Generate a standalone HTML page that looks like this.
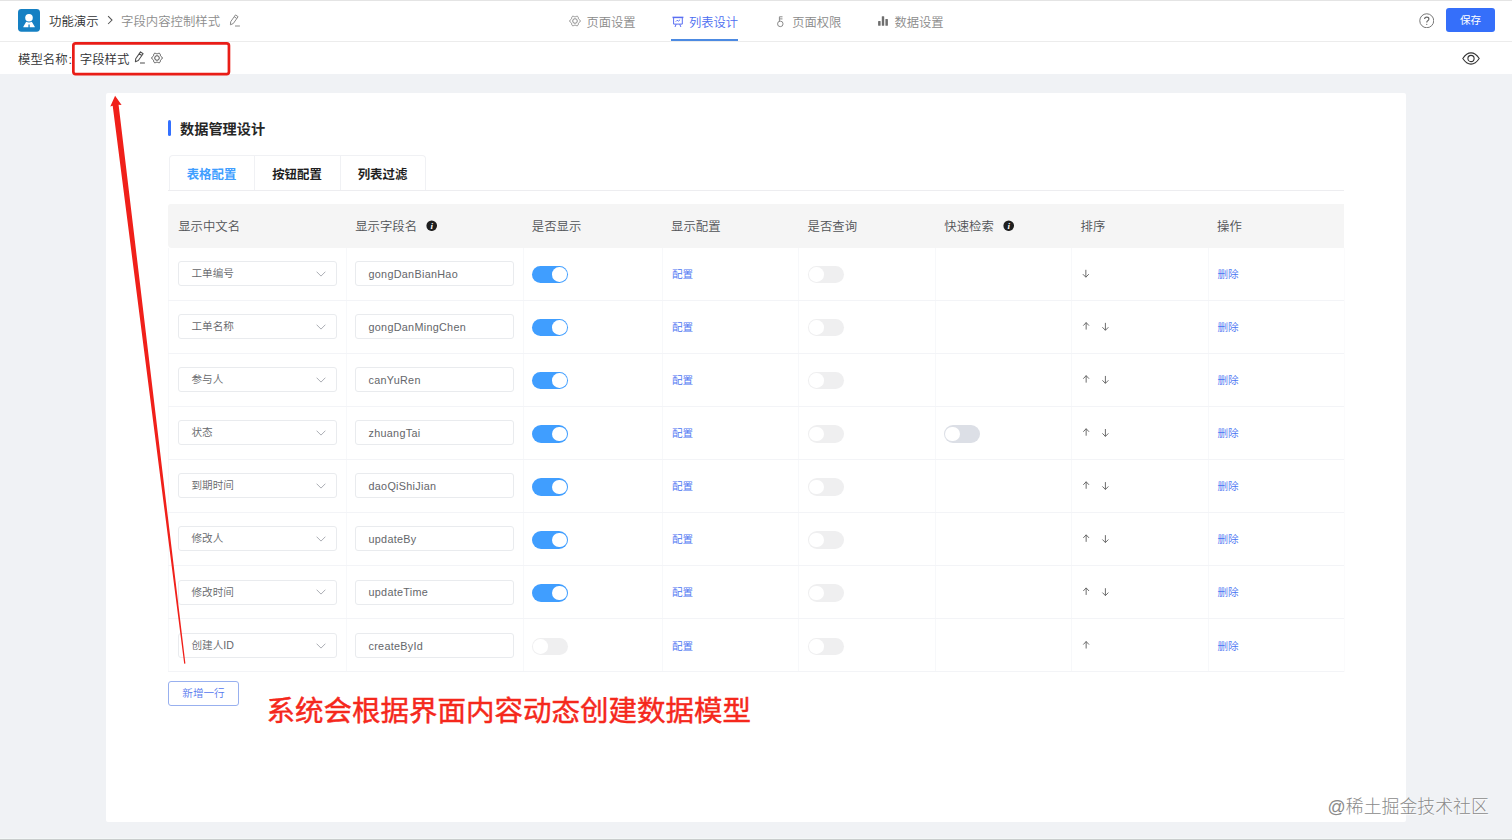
<!DOCTYPE html>
<html lang="zh-CN">
<head>
<meta charset="utf-8">
<title>字段内容控制样式</title>
<style>
*{margin:0;padding:0;box-sizing:border-box}
html,body{width:1512px;height:840px;overflow:hidden}
body{position:relative;background:#f0f2f5;font-family:"Liberation Sans","Noto Sans CJK SC",sans-serif;font-size:12.4px;color:#303133;font-weight:350}
body>*{position:absolute}
.hdr{left:0;top:0;width:1512px;height:42px;background:#fff;border-top:1px solid #e4e4e4;border-bottom:1px solid #ececec}
.sub{left:0;top:42px;width:1512px;height:32px;background:#fff}
.card{left:106px;top:93px;width:1300px;height:729px;background:#fff;border-radius:2px}
.t{white-space:nowrap;line-height:20px;height:20px}
.logo{left:18px;top:9.2px;width:22px;height:22.7px}
.nav{font-size:12.3px;color:#8a8a8a;top:12.9px}
.nav.act{color:#4a6cf0}
.ul{left:671px;top:39px;width:67px;height:2px;background:#4c8ae2}
.save{left:1446px;top:8px;width:49px;height:24.4px;background:#356ffa;border-radius:3px;color:#fff;font-size:10.6px;line-height:25.4px;text-align:center;font-weight:400}
.bar{left:168px;top:120px;width:3px;height:16px;background:#3370ff;border-radius:1.5px}
.h1{left:180px;top:119px;font-size:14.2px;font-weight:bold;color:#262626;line-height:20px;white-space:nowrap}
.tabs{left:169px;top:155px;width:257px;height:36px;border:1px solid #f0f1f4;border-bottom:none;border-radius:4px 4px 0 0}
.tabline{left:168px;top:190px;width:1176px;height:1px;background:#ededf0}
.tab{top:165.1px;width:86px;text-align:center;font-weight:bold;font-size:12.4px;line-height:20px;color:#1f1f1f}
.tab.act{color:#409eff}
.tdv{top:155px;width:1px;height:35px;background:#f0f1f4}
.thead{left:168px;top:204px;width:1176px;height:43.5px;background:#f5f5f5;border-radius:3px 0 0 4px}
.th{top:216.7px;font-size:12.37px;line-height:20px;color:#505256;white-space:nowrap}
.info{width:11.4px;height:11.4px;top:220px}
.vl{top:247.5px;width:1px;height:424px;background:#f7f8fa}
.hl{left:168px;width:1176px;height:1px;background:#f3f4f7}
.sel,.inp{height:25px;width:159px;border:1px solid #e9ebee;border-radius:3px;background:#fff;font-size:10.6px;color:#64666a;line-height:23.4px;white-space:nowrap}
.sel{left:177.5px;padding-left:13px}
.sel svg{position:absolute;right:9.6px;top:8.6px;width:10px;height:6px}
.inp{left:355px;padding-left:12.5px;font-size:10.8px;letter-spacing:0.3px}
.inp span{position:relative;top:0.8px}
.sw{width:36px;height:17.4px;border-radius:9px}
.sw i{position:absolute;top:1.4px;width:14.6px;height:14.6px;border-radius:50%;background:#fff}
.sw.on{background:#409eff}.sw.on i{right:1.3px}
.sw.off{background:#dcdfe6}.sw.off i{left:1.2px}
.sw.dis{background:#efeff0}.sw.dis i{left:1.2px}
.lk{font-size:10.6px;line-height:20px;color:#4a74f2;white-space:nowrap}
.add{left:168px;top:681px;width:71px;height:24.8px;border:1px solid #98b0ef;border-radius:3px;background:#fff;color:#5577ee;font-size:10.6px;line-height:22.5px;text-align:center}
.note{left:266.6px;top:689px;font-size:28.5px;line-height:44px;color:#f5281c;white-space:nowrap;font-weight:400;-webkit-text-stroke:0.45px #f5281c}
.wm{left:1327.6px;top:793.6px;font-size:17.9px;line-height:26px;color:#8a8a8a;font-weight:300;white-space:nowrap;text-shadow:0 0 1px #fff,1px 1px 1px rgba(255,255,255,.8)}
.arrow{left:0;top:0;width:1512px;height:840px;pointer-events:none}
.botline{left:0;top:838px;width:1512px;height:2px;background:#c9cdcd;border-top:1px solid #f3f7f7}
</style>
</head>
<body>
<div class="hdr"></div>
<div class="sub"></div>
<svg class="logo" viewBox="0 0 22 22.7"><rect width="22" height="22.7" rx="3.4" fill="#1580c3"/><circle cx="11" cy="8.75" r="3.8" fill="#fff"/><path d="M8.2 12.8Q11 14.2 13.8 12.8L16.8 17.7Q17 18.3 16.4 18.3H11.7V15.5H10.4V18.3H5.7Q5.1 18.3 5.3 17.7Z" fill="#fff"/></svg>
<div class="t" style="left:49px;top:11.9px;color:#303133">功能演示</div>
<svg style="left:107px;top:15px;width:6px;height:10px" viewBox="0 0 6 10"><path d="M1.1 1.2L5 5.1L1.1 9" fill="none" stroke="#555" stroke-width="1.05"/></svg>
<div class="t" style="left:121px;top:11.9px;color:#8c8c8c">字段内容控制样式</div>
<svg style="left:229px;top:14.2px;width:12px;height:13px" viewBox="0 0 12 13"><path d="M6.5 0.9L9.1 2.7L4.3 9.5L1.4 10.8L1.7 7.7ZM5.2 2.7L7.8 4.5M6 12H10.9" fill="none" stroke="#8a8a8a" stroke-width="1" stroke-linejoin="round"/></svg>
<!-- nav -->
<svg style="left:568.6px;top:15.3px;width:12px;height:12px" viewBox="0 0 12 12"><path d="M11.25 6.00L11.16 6.45L10.90 6.86L10.54 7.22L10.16 7.51L9.83 7.79L9.59 8.07L9.46 8.42L9.39 8.84L9.32 9.32L9.20 9.81L8.97 10.24L8.62 10.55L8.19 10.69L7.70 10.67L7.22 10.54L6.77 10.36L6.37 10.21L6.00 10.15L5.63 10.21L5.23 10.36L4.78 10.54L4.30 10.67L3.81 10.69L3.38 10.55L3.03 10.24L2.80 9.81L2.68 9.32L2.61 8.84L2.54 8.42L2.41 8.08L2.17 7.79L1.84 7.51L1.46 7.22L1.10 6.86L0.84 6.45L0.75 6.00L0.84 5.55L1.10 5.14L1.46 4.78L1.84 4.49L2.17 4.21L2.41 3.92L2.54 3.58L2.61 3.16L2.68 2.68L2.80 2.19L3.03 1.76L3.37 1.45L3.81 1.31L4.30 1.33L4.78 1.46L5.23 1.64L5.63 1.79L6.00 1.85L6.37 1.79L6.77 1.64L7.22 1.46L7.70 1.33L8.19 1.31L8.62 1.45L8.97 1.76L9.20 2.19L9.32 2.68L9.39 3.16L9.46 3.58L9.59 3.93L9.83 4.21L10.16 4.49L10.54 4.78L10.90 5.14L11.16 5.55Z" fill="none" stroke="#8a8a8a" stroke-width="1"/><circle cx="6" cy="6" r="2.3" fill="none" stroke="#8a8a8a" stroke-width="1"/></svg>
<div class="t nav" style="left:586.4px">页面设置</div>
<svg style="left:671.5px;top:15.5px;width:12px;height:12px" viewBox="0 0 12 12"><path d="M0.5 1.4H11.4" fill="none" stroke="#5b6ff2" stroke-width="1.5"/><path d="M1.6 1.6V8.1H10.3V1.6M3.8 5.6L5.1 4.3L6.5 5.1L8.1 3.7M4.2 8.1L3 11M7.7 8.1L8.9 11" fill="none" stroke="#5b6ff2" stroke-width="1"/></svg>
<div class="t nav act" style="left:688.9px">列表设计</div>
<div class="ul"></div>
<svg style="left:776px;top:15.5px;width:8px;height:12px" viewBox="0 0 8 12"><circle cx="4.3" cy="7.9" r="2.75" fill="none" stroke="#8a8a8a" stroke-width="1"/><path d="M3.4 5.3V0.8H6.5M3.4 2.9H6.5" fill="none" stroke="#8a8a8a" stroke-width="1"/></svg>
<div class="t nav" style="left:792.2px">页面权限</div>
<svg style="left:878px;top:16px;width:10px;height:10px" viewBox="0 0 10 10"><rect x="0.1" y="4.9" width="2.5" height="4.9" rx="0.6" fill="#6e6e6e"/><rect x="3.8" y="0.2" width="2.4" height="9.6" rx="0.6" fill="#6e6e6e"/><rect x="7.4" y="2.9" width="2.5" height="6.9" rx="0.6" fill="#6e6e6e"/></svg>
<div class="t nav" style="left:894.4px">数据设置</div>
<svg style="left:1418.7px;top:12.7px;width:15.5px;height:15.5px" viewBox="0 0 16 16"><circle cx="8" cy="8" r="7.2" fill="none" stroke="#737373" stroke-width="1"/><path d="M5.8 6.3Q5.8 4.2 8 4.2Q10.2 4.2 10.2 6.1Q10.2 7.2 9 7.9Q8 8.5 8 9.8" fill="none" stroke="#666" stroke-width="1.2"/><circle cx="8" cy="11.7" r="0.7" fill="#737373"/></svg>
<div class="save">保存</div>
<!-- sub bar -->
<div class="t" style="left:18px;top:49.8px;color:#303133">模型名称<span style="margin-left:1px">:</span></div>
<div class="t" style="left:79.8px;top:49.8px;color:#303133">字段样式</div>
<svg style="left:134px;top:51px;width:12px;height:13px" viewBox="0 0 12 13"><path d="M6.5 0.9L9.1 2.7L4.3 9.5L1.4 10.8L1.7 7.7ZM5.2 2.7L7.8 4.5M6 12H10.9" fill="none" stroke="#4d4d4d" stroke-width="1.05" stroke-linejoin="round"/></svg>
<svg style="left:150.8px;top:51.9px;width:12px;height:12px" viewBox="0 0 12 12"><path d="M11.25 6.00L11.16 6.45L10.90 6.86L10.54 7.22L10.16 7.51L9.83 7.79L9.59 8.07L9.46 8.42L9.39 8.84L9.32 9.32L9.20 9.81L8.97 10.24L8.62 10.55L8.19 10.69L7.70 10.67L7.22 10.54L6.77 10.36L6.37 10.21L6.00 10.15L5.63 10.21L5.23 10.36L4.78 10.54L4.30 10.67L3.81 10.69L3.38 10.55L3.03 10.24L2.80 9.81L2.68 9.32L2.61 8.84L2.54 8.42L2.41 8.08L2.17 7.79L1.84 7.51L1.46 7.22L1.10 6.86L0.84 6.45L0.75 6.00L0.84 5.55L1.10 5.14L1.46 4.78L1.84 4.49L2.17 4.21L2.41 3.92L2.54 3.58L2.61 3.16L2.68 2.68L2.80 2.19L3.03 1.76L3.37 1.45L3.81 1.31L4.30 1.33L4.78 1.46L5.23 1.64L5.63 1.79L6.00 1.85L6.37 1.79L6.77 1.64L7.22 1.46L7.70 1.33L8.19 1.31L8.62 1.45L8.97 1.76L9.20 2.19L9.32 2.68L9.39 3.16L9.46 3.58L9.59 3.93L9.83 4.21L10.16 4.49L10.54 4.78L10.90 5.14L11.16 5.55Z" fill="none" stroke="#4d4d4d" stroke-width="1"/><circle cx="6" cy="6" r="2.3" fill="none" stroke="#4d4d4d" stroke-width="1"/></svg>
<svg style="left:1462px;top:51.5px;width:18px;height:13px" viewBox="0 0 18 13"><path d="M0.8 6.5Q4.5 0.9 9 0.9Q13.5 0.9 17.2 6.5Q13.5 12.1 9 12.1Q4.5 12.1 0.8 6.5Z" fill="none" stroke="#333" stroke-width="1.1"/><circle cx="9" cy="6.5" r="3.1" fill="none" stroke="#333" stroke-width="1.1"/></svg>
<svg style="left:70px;top:40px;width:164px;height:38px" viewBox="0 0 164 38"><rect x="3.35" y="3.3" width="155.6" height="30.8" rx="2.3" fill="none" stroke="#e91d17" stroke-width="2.7"/></svg>
<div class="card"></div>
<div class="bar"></div>
<div class="h1">数据管理设计</div>
<div class="tabs"></div>
<div class="tabline"></div>
<div class="tdv" style="left:254px"></div>
<div class="tdv" style="left:339.5px"></div>
<div class="tab act" style="left:168.5px">表格配置</div>
<div class="tab" style="left:254px">按钮配置</div>
<div class="tab" style="left:339.5px">列表过滤</div>
<div class="thead"></div>
<div class="th" style="left:178.2px">显示中文名</div>
<div class="th" style="left:355.2px">显示字段名</div>
<svg class="info" style="left:426.1px" viewBox="0 0 12 12"><circle cx="6" cy="6" r="5.6" fill="#1f1f1f"/><text x="6" y="9.3" text-anchor="middle" font-family="Liberation Serif, serif" font-style="italic" font-weight="bold" font-size="9.5" fill="#fff">i</text></svg>
<div class="th" style="left:531.8px">是否显示</div>
<div class="th" style="left:671.1px">显示配置</div>
<div class="th" style="left:807.6px">是否查询</div>
<div class="th" style="left:944.3px">快速检索</div>
<svg class="info" style="left:1003.1px" viewBox="0 0 12 12"><circle cx="6" cy="6" r="5.6" fill="#1f1f1f"/><text x="6" y="9.3" text-anchor="middle" font-family="Liberation Serif, serif" font-style="italic" font-weight="bold" font-size="9.5" fill="#fff">i</text></svg>
<div class="th" style="left:1080.6px">排序</div>
<div class="th" style="left:1217.1px">操作</div>
<div class="vl" style="left:346px"></div>
<div class="vl" style="left:523px"></div>
<div class="vl" style="left:662px"></div>
<div class="vl" style="left:798px"></div>
<div class="vl" style="left:935px"></div>
<div class="vl" style="left:1071px"></div>
<div class="vl" style="left:1208px"></div>
<div class="vl" style="left:168px"></div>
<div class="vl" style="left:1343.5px;background:#fbfbfc"></div>
<div class="hl" style="top:300.0px"></div>
<div class="sel" style="top:261.10px"><span>工单编号</span><svg viewBox="0 0 10 6"><path d="M0.6 0.7 L5 5.1 L9.4 0.7" fill="none" stroke="#a6a9b0" stroke-width="0.95"/></svg></div>
<div class="inp" style="top:261.10px"><span>gongDanBianHao</span></div>
<div class="sw on" style="left:532px;top:265.90px"><i></i></div>
<div class="lk" style="left:672px;top:264.00px">配置</div>
<div class="sw dis" style="left:808px;top:265.90px"><i></i></div>
<svg style="left:1078px;top:266px;width:36px;height:16px" viewBox="0 0 36 16"><path d="M7.85 3.80V11.20M4.85 8.15L7.85 11.20L10.85 8.15" fill="none" stroke="#5c5c5c" stroke-width="0.9"/></svg>
<div class="lk" style="left:1217.5px;top:264.00px">删除</div>
<div class="hl" style="top:353.1px"></div>
<div class="sel" style="top:314.17px"><span>工单名称</span><svg viewBox="0 0 10 6"><path d="M0.6 0.7 L5 5.1 L9.4 0.7" fill="none" stroke="#a6a9b0" stroke-width="0.95"/></svg></div>
<div class="inp" style="top:314.17px"><span>gongDanMingChen</span></div>
<div class="sw on" style="left:532px;top:318.97px"><i></i></div>
<div class="lk" style="left:672px;top:317.07px">配置</div>
<div class="sw dis" style="left:808px;top:318.97px"><i></i></div>
<svg style="left:1078px;top:319px;width:36px;height:16px" viewBox="0 0 36 16"><path d="M8.15 10.57V3.57M5.300000000000001 6.62L8.15 3.57L11.0 6.62M27.4 3.87V11.27M24.4 8.22L27.4 11.27L30.4 8.22" fill="none" stroke="#5c5c5c" stroke-width="0.9"/></svg>
<div class="lk" style="left:1217.5px;top:317.07px">删除</div>
<div class="hl" style="top:406.1px"></div>
<div class="sel" style="top:367.24px"><span>参与人</span><svg viewBox="0 0 10 6"><path d="M0.6 0.7 L5 5.1 L9.4 0.7" fill="none" stroke="#a6a9b0" stroke-width="0.95"/></svg></div>
<div class="inp" style="top:367.24px"><span>canYuRen</span></div>
<div class="sw on" style="left:532px;top:372.04px"><i></i></div>
<div class="lk" style="left:672px;top:370.14px">配置</div>
<div class="sw dis" style="left:808px;top:372.04px"><i></i></div>
<svg style="left:1078px;top:372px;width:36px;height:16px" viewBox="0 0 36 16"><path d="M8.15 10.64V3.64M5.300000000000001 6.69L8.15 3.64L11.0 6.69M27.4 3.94V11.34M24.4 8.29L27.4 11.34L30.4 8.29" fill="none" stroke="#5c5c5c" stroke-width="0.9"/></svg>
<div class="lk" style="left:1217.5px;top:370.14px">删除</div>
<div class="hl" style="top:459.1px"></div>
<div class="sel" style="top:420.31px"><span>状态</span><svg viewBox="0 0 10 6"><path d="M0.6 0.7 L5 5.1 L9.4 0.7" fill="none" stroke="#a6a9b0" stroke-width="0.95"/></svg></div>
<div class="inp" style="top:420.31px"><span>zhuangTai</span></div>
<div class="sw on" style="left:532px;top:425.11px"><i></i></div>
<div class="lk" style="left:672px;top:423.21px">配置</div>
<div class="sw dis" style="left:808px;top:425.11px"><i></i></div>
<div class="sw off" style="left:944px;top:425.11px"><i></i></div>
<svg style="left:1078px;top:425px;width:36px;height:16px" viewBox="0 0 36 16"><path d="M8.15 10.71V3.71M5.300000000000001 6.76L8.15 3.71L11.0 6.76M27.4 4.01V11.41M24.4 8.36L27.4 11.41L30.4 8.36" fill="none" stroke="#5c5c5c" stroke-width="0.9"/></svg>
<div class="lk" style="left:1217.5px;top:423.21px">删除</div>
<div class="hl" style="top:512.2px"></div>
<div class="sel" style="top:473.38px"><span>到期时间</span><svg viewBox="0 0 10 6"><path d="M0.6 0.7 L5 5.1 L9.4 0.7" fill="none" stroke="#a6a9b0" stroke-width="0.95"/></svg></div>
<div class="inp" style="top:473.38px"><span>daoQiShiJian</span></div>
<div class="sw on" style="left:532px;top:478.18px"><i></i></div>
<div class="lk" style="left:672px;top:476.28px">配置</div>
<div class="sw dis" style="left:808px;top:478.18px"><i></i></div>
<svg style="left:1078px;top:478px;width:36px;height:16px" viewBox="0 0 36 16"><path d="M8.15 10.78V3.78M5.300000000000001 6.83L8.15 3.78L11.0 6.83M27.4 4.08V11.48M24.4 8.43L27.4 11.48L30.4 8.43" fill="none" stroke="#5c5c5c" stroke-width="0.9"/></svg>
<div class="lk" style="left:1217.5px;top:476.28px">删除</div>
<div class="hl" style="top:565.2px"></div>
<div class="sel" style="top:526.45px"><span>修改人</span><svg viewBox="0 0 10 6"><path d="M0.6 0.7 L5 5.1 L9.4 0.7" fill="none" stroke="#a6a9b0" stroke-width="0.95"/></svg></div>
<div class="inp" style="top:526.45px"><span>updateBy</span></div>
<div class="sw on" style="left:532px;top:531.25px"><i></i></div>
<div class="lk" style="left:672px;top:529.35px">配置</div>
<div class="sw dis" style="left:808px;top:531.25px"><i></i></div>
<svg style="left:1078px;top:531px;width:36px;height:16px" viewBox="0 0 36 16"><path d="M8.15 10.85V3.85M5.300000000000001 6.90L8.15 3.85L11.0 6.90M27.4 4.15V11.55M24.4 8.50L27.4 11.55L30.4 8.50" fill="none" stroke="#5c5c5c" stroke-width="0.9"/></svg>
<div class="lk" style="left:1217.5px;top:529.35px">删除</div>
<div class="hl" style="top:618.3px"></div>
<div class="sel" style="top:579.52px"><span>修改时间</span><svg viewBox="0 0 10 6"><path d="M0.6 0.7 L5 5.1 L9.4 0.7" fill="none" stroke="#a6a9b0" stroke-width="0.95"/></svg></div>
<div class="inp" style="top:579.52px"><span>updateTime</span></div>
<div class="sw on" style="left:532px;top:584.32px"><i></i></div>
<div class="lk" style="left:672px;top:582.42px">配置</div>
<div class="sw dis" style="left:808px;top:584.32px"><i></i></div>
<svg style="left:1078px;top:584px;width:36px;height:16px" viewBox="0 0 36 16"><path d="M8.15 10.92V3.92M5.300000000000001 6.97L8.15 3.92L11.0 6.97M27.4 4.22V11.62M24.4 8.57L27.4 11.62L30.4 8.57" fill="none" stroke="#5c5c5c" stroke-width="0.9"/></svg>
<div class="lk" style="left:1217.5px;top:582.42px">删除</div>
<div class="hl" style="top:671.0px"></div>
<div class="sel" style="top:633.10px"><span>创建人ID</span><svg viewBox="0 0 10 6"><path d="M0.6 0.7 L5 5.1 L9.4 0.7" fill="none" stroke="#a6a9b0" stroke-width="0.95"/></svg></div>
<div class="inp" style="top:633.10px"><span>createById</span></div>
<div class="sw dis" style="left:532px;top:637.90px"><i></i></div>
<div class="lk" style="left:672px;top:636.00px">配置</div>
<div class="sw dis" style="left:808px;top:637.90px"><i></i></div>
<svg style="left:1078px;top:638px;width:36px;height:16px" viewBox="0 0 36 16"><path d="M8.15 10.50V3.50M5.300000000000001 6.55L8.15 3.50L11.0 6.55" fill="none" stroke="#5c5c5c" stroke-width="0.9"/></svg>
<div class="lk" style="left:1217.5px;top:636.00px">删除</div>
<div class="add">新增一行</div>
<div class="note">系统会根据界面内容动态创建数据模型</div>
<div class="wm">@稀土掘金技术社区</div>
<svg class="arrow" viewBox="0 0 1512 840"><path d="M115.1 95.8L121.6 105L118.6 104.8L185.4 663.5L184.2 663.7L112.7 105.8L110.3 106.5Z" fill="#f0201a"/></svg>
<div class="botline"></div>
</body>
</html>
